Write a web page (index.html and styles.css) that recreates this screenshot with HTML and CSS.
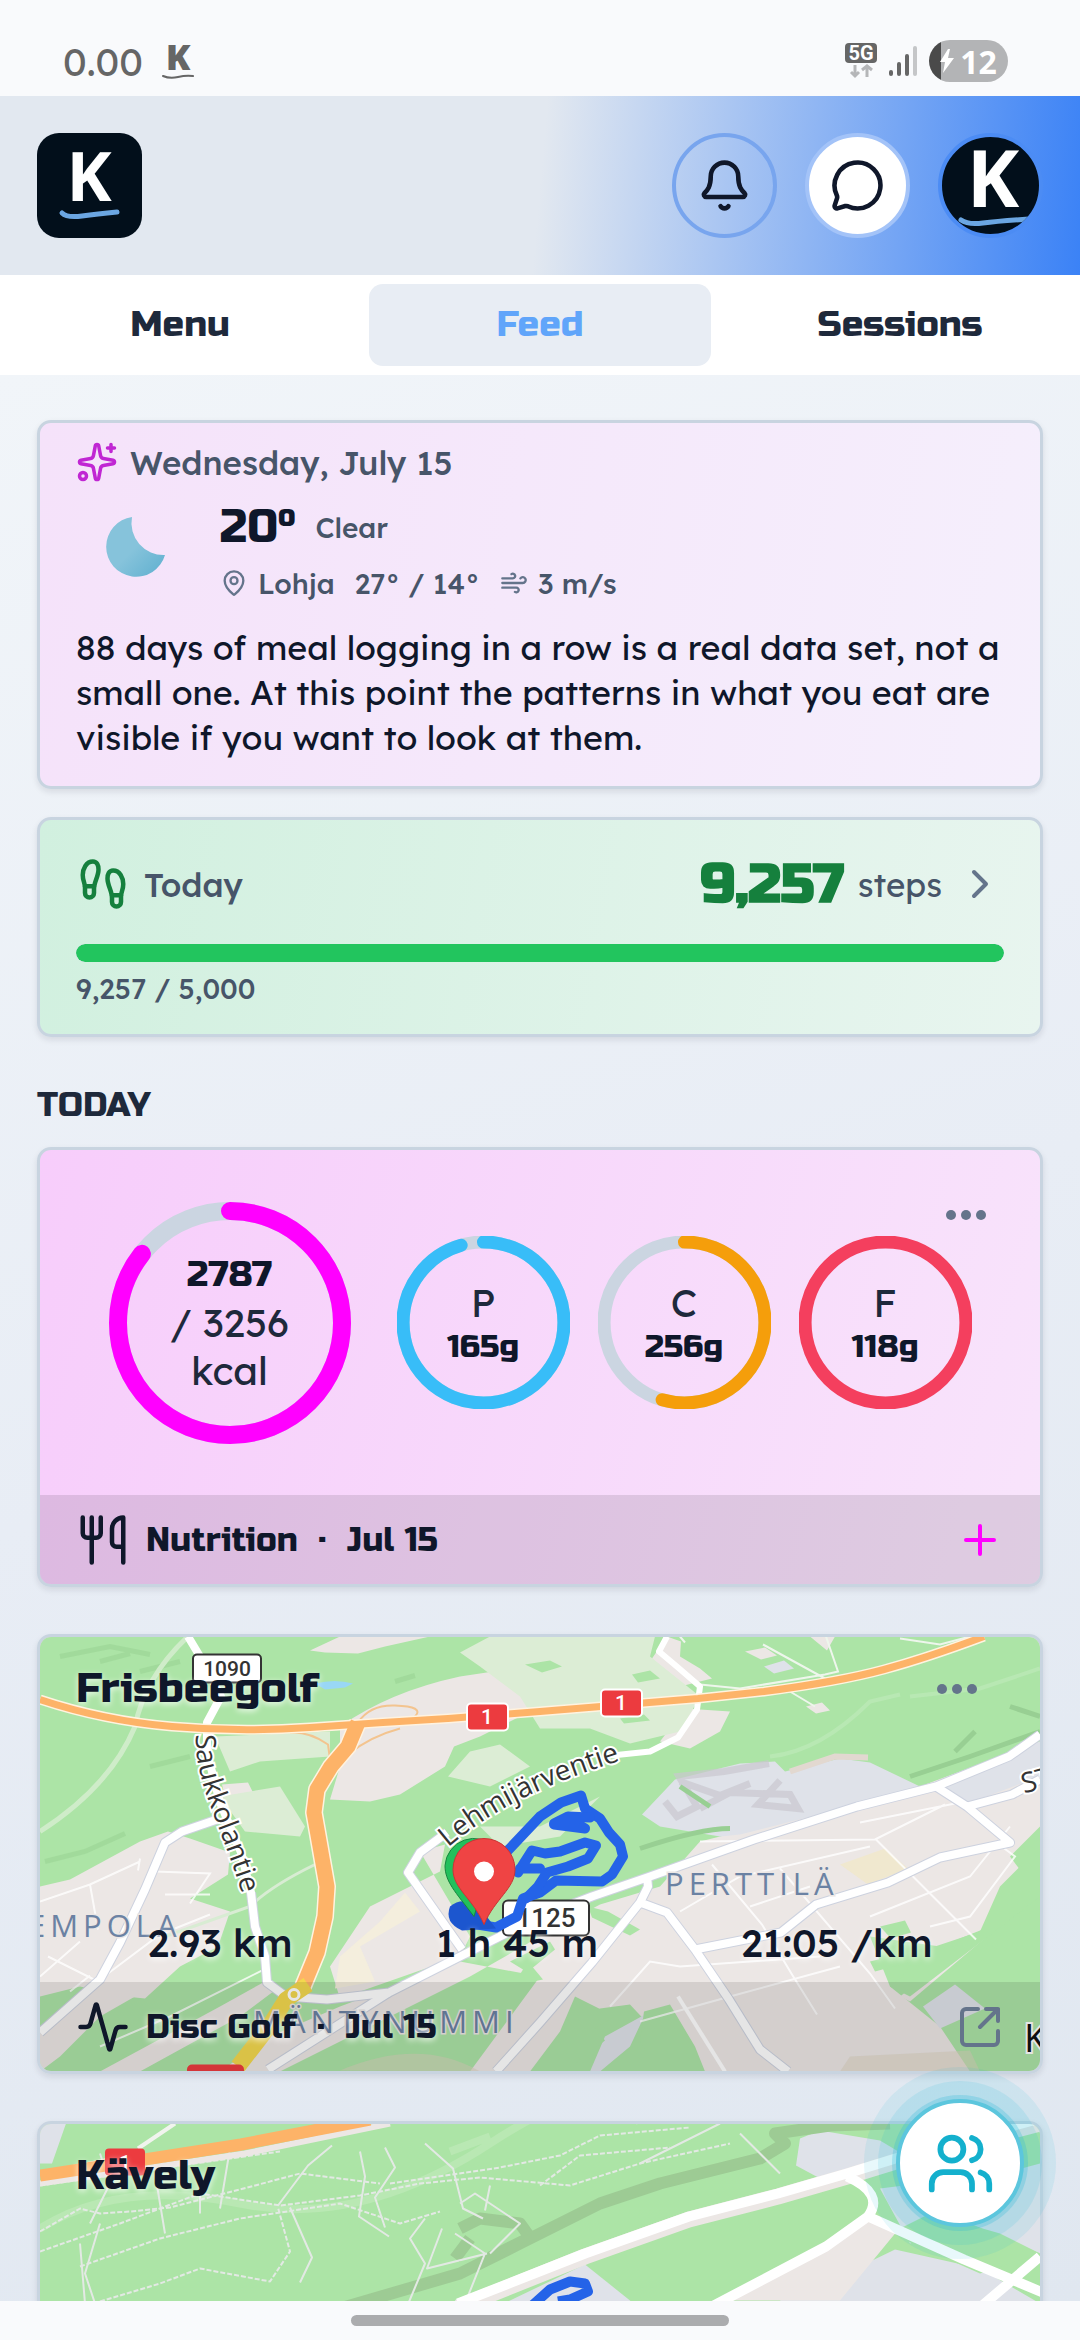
FILE: index.html
```html
<!doctype html>
<html lang="en">
  <head>
    <meta charset="UTF-8" />
    <meta name="viewport" content="width=device-width, initial-scale=1.0" />
    <title>Feed</title>
    <link rel="stylesheet" href="styles.css">
  </head>
  <body>
    <div class="status-bar">
      <div class="status-left">
        <span>0.00</span>
        <svg class="status-logo" viewBox="0 0 34 38">
          <text x="17" y="28" text-anchor="middle" class="status-k">K</text>
          <path d="M2 34q7 3 15 1t15-1" fill="none" stroke="#666" stroke-width="2" stroke-linecap="round" />
        </svg>
      </div>
      <div class="status-right">
        <svg width="32" height="36" viewBox="0 0 32 36">
          <rect width="32" height="20" rx="4" fill="#666" />
          <text x="16" y="17" text-anchor="middle" class="net-text">5G</text>
          <path d="M10 22v11m-4-4l4 4 4-4M22 34V23m-5 4l5-4 5 4" fill="none" stroke="#b5b6b8" stroke-width="3" />
        </svg>
        <svg width="28" height="30" viewBox="0 0 28 30">
          <path d="M2 26v2M10 18v10M18 10v18" stroke="#666" stroke-width="4" stroke-linecap="round" />
          <path d="M26 2v26" stroke="#c5c6c8" stroke-width="4" stroke-linecap="round" />
        </svg>
        <div class="battery">
          <svg width="14" height="24" viewBox="0 0 14 24"><path d="M8 0L0 13h5L3 24 14 9H8l2-9z" fill="#fff" /></svg>
          <span>12</span>
        </div>
      </div>
    </div>

    <header class="header">
      <a class="logo" href="#" aria-label="Home">
        <svg viewBox="0 0 105 105">
          <text x="52" y="68" text-anchor="middle" class="logo-k">K</text>
          <path d="M25 80q5 5 20 3t35-4" fill="none" stroke="#6ba6e2" stroke-width="5" stroke-linecap="round" />
        </svg>
      </a>
      <div class="header-actions">
        <button class="round-btn" aria-label="Notifications">
          <svg class="icon" width="55" height="55" viewBox="0 0 24 24">
            <path d="M10.268 21a2 2 0 0 0 3.464 0" />
            <path d="M3.262 15.326A1 1 0 0 0 4 17h16a1 1 0 0 0 .74-1.673C19.41 13.956 18 12.499 18 8A6 6 0 0 0 6 8c0 4.499-1.411 5.956-2.738 7.326" />
          </svg>
        </button>
        <button class="round-btn round-btn-white" aria-label="Messages">
          <svg class="icon" width="55" height="55" viewBox="0 0 24 24">
            <path d="M2.992 16.342a2 2 0 0 1 .094 1.167l-1.065 3.29a1 1 0 0 0 1.236 1.168l3.413-.998a2 2 0 0 1 1.099.092 10 10 0 1 0-4.777-4.719" />
          </svg>
        </button>
        <button class="round-btn round-btn-avatar" aria-label="Profile">
          <svg viewBox="0 0 97 97">
            <text x="51" y="70" text-anchor="middle" class="avatar-k">K</text>
            <path d="M19 83q7 5 22 3t46-4" fill="none" stroke="#6ba6e2" stroke-width="5" stroke-linecap="round" />
          </svg>
        </button>
      </div>
    </header>

    <nav class="tabs">
      <a href="#" class="tab">Menu</a>
      <a href="#" class="tab active">Feed</a>
      <a href="#" class="tab">Sessions</a>
    </nav>

    <main class="feed">
      <section class="card daily">
        <div class="daily-date">
          <svg class="icon icon-purple" width="42" height="42" viewBox="0 0 24 24">
            <path d="M11.017 2.814a1 1 0 0 1 1.966 0l1.051 5.558a2 2 0 0 0 1.594 1.594l5.558 1.051a1 1 0 0 1 0 1.966l-5.558 1.051a2 2 0 0 0-1.594 1.594l-1.051 5.558a1 1 0 0 1-1.966 0l-1.051-5.558a2 2 0 0 0-1.594-1.594l-5.558-1.051a1 1 0 0 1 0-1.966l5.558-1.051a2 2 0 0 0 1.594-1.594z" />
            <path d="M20 2v4M22 4h-4" />
            <circle cx="4" cy="20" r="2" />
          </svg>
          <span>Wednesday, July 15</span>
        </div>
        <div class="weather">
          <svg class="moon" width="120" height="78" viewBox="0 0 120 78">
            <defs>
              <linearGradient id="moon" x1="0" y1="0" x2="1" y2="1">
                <stop offset="0.5" stop-color="#86c3db" />
                <stop offset="1" stop-color="#5eafcf" />
              </linearGradient>
            </defs>
            <path d="M56 1A30 30 0 1 0 89 39A32 32 0 0 1 56 1z" fill="url(#moon)" />
          </svg>
          <div>
            <div class="weather-row">
              <span class="temp">20º</span>
              <span>Clear</span>
            </div>
            <div class="weather-row">
              <span class="weather-item">
                <svg class="icon icon-muted" width="28" height="28" viewBox="0 0 24 24">
                  <path d="M20 10c0 4.993-5.539 10.193-7.399 11.799a1 1 0 0 1-1.202 0C9.539 20.193 4 14.993 4 10a8 8 0 0 1 16 0" />
                  <circle cx="12" cy="10" r="3" />
                </svg>
                Lohja
              </span>
              <span>27° / 14°</span>
              <span class="weather-item">
                <svg class="icon icon-muted" width="28" height="28" viewBox="0 0 24 24">
                  <path d="M12.8 19.6A2 2 0 1 0 14 16H2" />
                  <path d="M17.5 8a2.5 2.5 0 1 1 2 4H2" />
                  <path d="M9.8 4.4A2 2 0 1 1 11 8H2" />
                </svg>
                3 m/s
              </span>
            </div>
          </div>
        </div>
        <p class="daily-text">88 days of meal logging in a row is a real data set, not a small one. At this point the patterns in what you eat are visible if you want to look at them.</p>
      </section>

      <section class="card steps">
        <div class="steps-row">
          <svg class="icon icon-green" width="54" height="54" viewBox="0 0 24 24">
            <path d="M4 16v-2.38C4 11.5 2.97 10.5 3 8c.03-2.72 1.49-6 4.5-6C9.37 2 10 3.8 10 5.5c0 3.11-2 5.66-2 8.68V16a2 2 0 1 1-4 0Z" />
            <path d="M20 20v-2.38c0-2.12 1.03-3.12 1-5.62-.03-2.72-1.49-6-4.5-6C14.63 6 14 7.8 14 9.5c0 3.11 2 5.66 2 8.68V20a2 2 0 1 0 4 0Z" />
            <path d="M16 17h4M4 13h4" />
          </svg>
          <span class="steps-label">Today</span>
          <span class="steps-count">9,257</span>
          <span>steps</span>
          <svg class="icon icon-muted" width="48" height="48" viewBox="0 0 24 24"><path d="m9 18 6-6-6-6" /></svg>
        </div>
        <div class="progress"><div class="progress-fill" style="width: 100%"></div></div>
        <div class="steps-goal">9,257 / 5,000</div>
      </section>

      <h2 class="section-title">TODAY</h2>

      <section class="card tile">
        <div class="tile-body nutrition">
          <button class="more more-nutrition" aria-label="More">
            <svg width="42" height="12" viewBox="0 0 42 12"><circle cx="6" cy="6" r="5" /><circle cx="21" cy="6" r="5" /><circle cx="36" cy="6" r="5" /></svg>
          </button>
          <div class="ring ring-big">
            <svg viewBox="0 0 242 242">
              <circle class="track" cx="121" cy="121" r="112" stroke-width="18" />
              <circle class="arc" cx="121" cy="121" r="112" stroke-width="18" stroke="#ff00ff" pathLength="100" stroke-dasharray="85.6 100" />
            </svg>
            <div class="ring-text">
              <strong>2787</strong>
              <span>/ 3256</span>
              <span>kcal</span>
            </div>
          </div>
          <div class="macros">
            <div class="ring">
              <svg viewBox="0 0 172 172">
                <circle class="track" cx="86" cy="86" r="80" stroke-width="13" />
                <circle class="arc" cx="86" cy="86" r="80" stroke-width="13" stroke="#38bdf8" pathLength="100" stroke-dasharray="95.5 100" />
              </svg>
              <div class="ring-text"><span>P</span><strong>165g</strong></div>
            </div>
            <div class="ring">
              <svg viewBox="0 0 172 172">
                <circle class="track" cx="86" cy="86" r="80" stroke-width="13" />
                <circle class="arc" cx="86" cy="86" r="80" stroke-width="13" stroke="#f59e0b" pathLength="100" stroke-dasharray="54.5 100" />
              </svg>
              <div class="ring-text"><span>C</span><strong>256g</strong></div>
            </div>
            <div class="ring">
              <svg viewBox="0 0 172 172">
                <circle class="arc" cx="86" cy="86" r="80" stroke-width="13" stroke="#f43f5e" />
              </svg>
              <div class="ring-text"><span>F</span><strong>118g</strong></div>
            </div>
          </div>
        </div>
        <footer class="tile-footer">
          <svg class="icon" width="54" height="54" viewBox="0 0 24 24">
            <path d="M3 2v7c0 1.1.9 2 2 2h4a2 2 0 0 0 2-2V2M7 2v20M21 15V2a5 5 0 0 0-5 5v6c0 1.1.9 2 2 2h3Zm0 0v7" />
          </svg>
          <span class="tile-meta">Nutrition&nbsp; ·&nbsp; Jul 15</span>
          <button class="footer-btn icon-magenta" aria-label="Add meal">
            <svg class="icon" width="48" height="48" viewBox="0 0 24 24"><path d="M5 12h14M12 5v14" /></svg>
          </button>
        </footer>
      </section>

      <section class="card tile">
        <svg class="map" viewBox="0 0 1000 435" preserveAspectRatio="xMidYMid slice">
          <rect width="1000" height="435" fill="#ace4a6" />
          <!-- open land -->
          <g fill="#ece7e5">
            <path d="M270 14L300 0H390L345 10 318 17 285 16z" />
            <path d="M0 250L30 243 100 205 128 195 150 202 190 216 188 238 150 262 190 275 178 310 140 330 105 362 85 360 40 350 0 360z" />
            <path d="M0 395L60 345 95 360 60 380 20 420 0 435z" />
            <path d="M182 148L208 146 214 158 200 168 186 164z" />
            <path d="M300 90Q350 55 420 40L500 28 560 40 500 70 440 100 414 110 405 130 360 158 330 165 290 163 300 130z" />
            <path d="M420 325L300 370 230 400 180 435H240L430 340 500 300 560 268 620 250 660 205 720 190 880 150 1000 105V190L970 220 985 240 950 290 900 310 830 300 850 350 900 390 930 435H640L620 400 590 368 560 372 520 400 500 435H430L500 340z" />
            <path d="M290 330L330 270 400 235 405 208 380 215 430 300 420 320 300 362z" />
            <path d="M225 345L240 350 200 380 100 435H60L180 370z" />
            <path d="M627 0L641 5 640 20 660 32 672 42 640 50 612 22z" />
            <path d="M645 72L690 75 680 95 650 112 620 105z" />
            <path d="M705 15l20-4 12 8-16 4zM770 0h25l-8 14zM766 70l16-4 8 8-14 3z" />
            <path d="M1000 255L870 365 860 360 985 262z" />
          </g>
          <g fill="#dcedd5">
            <path d="M420 16L450 0H615L610 20 660 60 640 95 590 107 550 92 500 92 480 60 440 30z" />
            <path d="M175 100L290 95 290 120 220 125 190 135zM408 140L430 115 460 108 490 130 450 150zM205 195L180 160 240 150 265 190 260 200z" />
            <path d="M440 190L500 190 560 160 520 200 460 210z" />
          </g>
          <g fill="#ace4a6">
            <path d="M485 28l25-4 12 6-20 6zM592 38l18-4 10 8-22 4zM580 82l24-4 6 6-26 3z" />
            <path d="M880 315l60-20 20-45 40-40V260L870 360 850 350 862 340zM830 325l40-10 10 8-45 12zM840 290l25-6 6 12-20 6z" />
            <path d="M548 270l20 5 32 18-10 6-38-18zM470 325l40-20 5 8-22 18 10 12-30 6 10-16z" />
          </g>
          <!-- industrial land -->
          <g fill="#dfe2e9">
            <path d="M602 178L635 143 700 127 735 125 745 135 800 122 830 126 880 150 810 170 700 198 680 200 620 190z" />
            <path d="M900 150L1000 105V140L925 168zM724 30l20-6 10 8-20 5z" />
            <path d="M565 400L605 378 590 410 560 435H550zM883 370L915 348 945 372 900 392z" />
          </g>
          <path d="M604 375L630 368 655 410 665 435H620L600 405zM535 360l40 20-20 12 10 12-40 31h-35l30-40z" fill="#ace4a6" />
          <g fill="none" stroke="#c9c8cf" stroke-width="7" opacity="0.7">
            <path d="M625 165l12 15 20-10-18-30 45-5 45-8M660 172l30-16 60 2 8 14-40-4 22-24M640 145l40 14 30-12" />
          </g>
          <path d="M750 135L795 120 828 121" fill="none" stroke="#e2d8d0" stroke-width="6" />
          <path d="M640 150l30 20M600 212q60-20 90-20M870 140l60-20 70-25M915 115l20-20M970 70l30 10" fill="none" stroke="#98cf93" stroke-width="5" />
          <path d="M340 285L365 256 380 275 320 310 335 345 295 352 300 320zM290 435z" fill="#f4eedd" />
          <path d="M800 228L845 212 868 232 828 248z" fill="#f0e8cf" />
          <path d="M300 434Q380 400 440 435zM810 420l120-6 10 21H800z" fill="#ddd3bf" opacity="0.5" />
          <path d="M275 47q20-5 38 0l-8 4-20 2z" fill="#99d7f5" />
          <!-- hill shading -->
          <g fill="none" stroke="#9dd697" stroke-width="5" opacity="0.7">
            <path d="M20 20l50-10 40 8M110 130l40-10M5 225l40-10 40-18M60 25l30-8M355 45l20-6M100 35l40-10" />
          </g>
          <!-- minor roads -->
          <g fill="none" stroke="#fff" stroke-width="2" opacity="0.8">
            <path d="M0 265L50 248 100 225M50 248l8 45M115 235l55 2-20 30M8 320l50 25M0 340l40-35M30 355l20-16M60 343l60-45 50-20M125 258h45M100 222l-2 12" />
            <path d="M672 228l50 60 30 50 25 40M740 232l90 105 25 35M836 203l70 70 30 30M830 280l100-40 40-50M660 205l175-2 70-35M820 186l100-20M640 275l60-35 130-30M570 370l40-45 30 5 140-10M600 385l90-25 110-30M890 290l40-10 45-60-20-15M710 270l60-20" />
            <path d="M60 410l70-30 100-50" />
          </g>
          <path d="M638 360L685 435" stroke="#fff" stroke-width="4" />
          <path d="M0 195Q70 150 95 90 105 40 148 0" fill="none" stroke="#cfecc9" stroke-width="5" />
          <path d="M275 228Q230 250 210 270L125 300" fill="none" stroke="#d8ecd3" stroke-width="3" />
          <path d="M660 48L700 52 785 38 798 35 786 0M640 0l5 6M785 42l-62-34M745 52l30 18M860 2l40 6 30-8" fill="none" stroke="#eef6ec" stroke-width="2" />
          <path d="M730 120q50-5 100-55l30-7M870 60l70-8 60-20" fill="none" stroke="#b8e8b3" stroke-width="4" />
          <!-- main roads -->
          <g fill="none" stroke="#cdd2df" stroke-width="10" stroke-linejoin="round">
            <path d="M211 256L215 290 225 320 227 346 246 360 287 363 349 356 428 316 500 280 552 260 610 240 714 203 817 170 896 150 969 120 1000 98" />
            <path d="M177 183L142 195 125 206 105 253 80 306 60 343 0 396M407 196L380 216 368 236 422 313M228 433L349 356" />
            <path d="M607 240L608 250 600 266 552 326 500 386 456 435M600 266L627 276 655 313 689 363 720 413 748 435M655 313L741 296 776 268 848 246 900 221 970 206 927 170 896 150M927 170L972 158 1000 143" />
          </g>
          <g fill="none" stroke="#fff" stroke-width="8" stroke-linejoin="round">
            <path d="M148 0L160 20 181 60 167 86 167 116 180 166 201 216 211 256 215 290 225 320 227 346 246 360 287 363 349 356 428 316 500 280 552 260 610 240 714 203 817 170 896 150 969 120 1000 98" />
            <path d="M177 183L142 195 125 206 105 253 80 306 60 343 0 396M407 196L380 216 368 236 422 313M228 433L349 356" />
            <path d="M607 240L608 250 600 266 552 326 500 386 456 435M600 266L627 276 655 313 689 363 720 413 748 435M655 313L741 296 776 268 848 246 900 221 970 206 927 170 896 150M927 170L972 158 1000 143" />
            <path d="M627 0L619 15 638 31 660 50 657 73 638 101 610 115 572 119" stroke-width="6" />
          </g>
          <!-- highways -->
          <g fill="none" stroke-linejoin="round">
            <path d="M318 86Q330 68 355 69 385 70 375 80 365 86 345 87M291 130L288 108Q270 95 250 96M308 118Q330 100 360 92" stroke="#f3c48f" stroke-width="2" />
            <path d="M318 86L308 110 291 130 277 153 274 176 280 210 287 250 285 280 277 316 263 350" stroke="#fff3e0" stroke-width="18" />
            <path d="M0 63Q63 84 132 90T270 91 408 82L500 75 658 62 724 55Q800 45 844 33T944 0" stroke="#fff3e0" stroke-width="10" />
            <path d="M0 63Q63 84 132 90T270 91 408 82L500 75 658 62 724 55Q800 45 844 33T944 0" stroke="#fdb368" stroke-width="7" />
            <path d="M318 86L308 110 291 130 277 153 274 176 280 210 287 250 285 280 277 316 263 350" stroke="#fdb368" stroke-width="15" />
            <path d="M268 348L246 363 229 390 198 430" stroke="#f3d84f" stroke-width="16" />
            <circle cx="254" cy="358" r="5" stroke="#fff" stroke-width="3" />
          </g>
          <!-- place names -->
          <g class="place">
            <text x="-12" y="300">EMPOLA</text>
            <text x="213" y="396">MÄNTYNUMMI</text>
            <text x="625" y="258">PERTTILÄ</text>
          </g>
          <g class="street">
            <path id="saukko" d="M156 98C154 150 184 190 210 284" fill="none" stroke="none" />
            <path id="lehmi" d="M408 211C450 175 500 148 600 118" fill="none" stroke="none" />
            <text><textPath href="#saukko">Saukkolantie</textPath></text>
            <text><textPath href="#lehmi">Lehmijärventie</textPath></text>
            <text x="984" y="157" transform="rotate(-15 984 157)">ST</text>
            <text x="984" y="415" class="town">K</text>
          </g>
          <!-- road shields -->
          <g class="shield">
            <rect x="153" y="18" width="68" height="28" rx="4" fill="#fff" stroke="#333" stroke-width="2" />
            <text x="187" y="39">1090</text>
            <rect x="463" y="264" width="86" height="35" rx="5" fill="#fff" stroke="#333" stroke-width="2" />
            <text x="506" y="290" class="shield-big">1125</text>
          </g>
          <g class="shield shield-red">
            <rect x="427" y="67" width="41" height="27" rx="4" fill="#ec3b3f" stroke="#fff" stroke-width="2" />
            <text x="447" y="87">1</text>
            <rect x="561" y="53" width="41" height="27" rx="4" fill="#ec3b3f" stroke="#fff" stroke-width="2" />
            <text x="581" y="73">1</text>
            <rect x="147" y="428" width="57" height="27" rx="5" fill="#ec3b3f" />
          </g>
          <!-- recorded route -->
          <g fill="none" stroke="#2463e8" stroke-width="10" stroke-linejoin="round" stroke-linecap="round">
            <path d="M466 216L500 180 521 166 541 159 545 172 560 182 569 196 580 208 583 220 572 238 562 245 516 244 500 256 483 262 477 280 456 291 425 286" />
            <path d="M514 187L528 180 550 181M514 188L545 192 534 186M478 236L492 214 505 217 520 215 545 206 556 209 548 222 528 230 507 236 498 250 486 262M480 232L500 232" />
          </g>
          <path d="M410 270q15-12 32 4l14 18-34 2q-18-8-12-24z" fill="#1c56cf" />
          <path d="M434 280C415 255 405 245 405 229a29 29 0 0 1 50-18z" fill="#22c05c" stroke="#18853f" />
          <path d="M444 288C433 262 413 252 413 233a31 31 0 0 1 62 0C475 252 455 262 444 288z" fill="#ef4444" stroke="#c93535" />
          <circle cx="444" cy="235" r="10" fill="#fff" />
        </svg>
        <div class="tile-body activity">
          <div class="tile-head">
            <h3 class="tile-title">Frisbeegolf</h3>
            <button class="more" aria-label="More">
              <svg width="42" height="12" viewBox="0 0 42 12"><circle cx="6" cy="6" r="5" /><circle cx="21" cy="6" r="5" /><circle cx="36" cy="6" r="5" /></svg>
            </button>
          </div>
          <div class="stats">
            <span>2.93 km</span>
            <span>1 h 45 m</span>
            <span>21:05 /km</span>
          </div>
        </div>
        <footer class="tile-footer">
          <svg class="icon" width="54" height="54" viewBox="0 0 24 24">
            <path d="M22 12h-2.48a2 2 0 0 0-1.93 1.46l-2.35 8.36a.25.25 0 0 1-.48 0L9.24 2.18a.25.25 0 0 0-.48 0l-2.35 8.36A2 2 0 0 1 4.49 12H2" />
          </svg>
          <span class="tile-meta">Disc Golf&nbsp; ·&nbsp; Jul 15</span>
          <button class="footer-btn icon-muted" aria-label="Open activity">
            <svg class="icon" width="48" height="48" viewBox="0 0 24 24"><path d="M15 3h6v6M21 3l-9 9M21 14v5a2 2 0 0 1-2 2H5a2 2 0 0 1-2-2V5a2 2 0 0 1 2-2h6" /></svg>
          </button>
        </footer>
      </section>

      <section class="card tile">
        <svg class="map" viewBox="0 0 1000 435" preserveAspectRatio="xMidYMid slice">
          <rect width="1000" height="435" fill="#ace4a6" />
          <path d="M0 0h26L12 40H0zM760 15l20-8 60 10 20 12-50 22-28 5-26-14z" fill="#dfe2e9" />
          <path d="M545 141L590 177 620 220H390L470 177zM855 126L793 156 740 177V435H1000V180L940 145z" fill="#dfe2e9" />
          <path d="M840 65l80-10 80-20v95l-70-30-60 20z" fill="#dfe2e9" />
          <path d="M850 110L890 90 960 110 1000 130 940 150zM900 40L1000 10V40L890 70z" fill="#ace4a6" />
          <path d="M690 177L790 120 828 90 860 104 800 177z" fill="#ece7e5" />
          <g fill="none" stroke="#9dcb94" stroke-width="12" stroke-linejoin="round">
            <path d="M300 185L420 150 480 120 560 80 620 60 720 35 745 20 735 10 790 2 850 0M430 115l-15 20M420 105l20-10 40 5 10 14-40 20" />
          </g>
          <path d="M0 105q80-50 200-25T450 20 600 0M410 28l40-15" fill="none" stroke="#b9e8b3" stroke-width="8" />
          <!-- trails -->
          <g fill="none" stroke="#e3e9e4" stroke-width="2" stroke-linejoin="round">
            <path d="M0 128L80 100 160 70 240 82 320 72 380 60 440 54 530 62 600 40 690 20M0 108L40 85 60 90 90 88 130 84 200 66 260 50 340 60M0 62L190 35 240 28M40 143L120 115 200 95 300 80 360 100 400 88M60 178L120 160 160 145 230 158 250 128 238 84M350 60l110-16 60-12 40-20 90-8M500 62l40-30 90-8M250 22l60-20" stroke-dasharray="5 2" />
            <path d="M40 120l5 60M60 100l-15 50 10 30M60 30l10 30-20 40M130 30l-15 20 10 60M238 82l30-40 24-20M320 28l5 25-6 40 30 20M345 24l10 20-20 30 10 30M385 20l28 25 10 40 20 10M190 25l-10 60M160 60v30M250 84l22 50-12 25M385 95l-15 20 15 25-25 60M402 105l-15 40 60-15M415 110l30 20-20 50M450 62l-5 25M420 80l15-10 45 30-30 30M600 40l80-40M700 10l40 40" />
          </g>
          <path d="M0 50L100 30M98 25L135 0" stroke="#f1f4ee" stroke-width="4" />
          <path d="M0 60L98 46 205 30 350 0" fill="none" stroke="#ece7e5" stroke-width="6" />
          <path d="M0 52L98 37 201 21 330-4" fill="none" stroke="#fdb368" stroke-width="12" />
          <g fill="none" stroke="#fff" stroke-width="10" stroke-linejoin="round">
            <path d="M418 184L545 133 649 96 738 73 807 53 862 36 1000 0" stroke="#ece7e5" stroke-width="16" />
            <path d="M418 180L545 130 649 93 738 70 807 50 862 33 1000-5M807 53Q845 70 828 93L786 123 670 184M828 93L924 136 1010 172M1000 133L940 184" />
          </g>
          <path d="M490 184L510 166 530 158 545 160 548 168 530 176 518 178" fill="none" stroke="#2463e8" stroke-width="10" stroke-linejoin="round" />
          <g class="shield shield-red">
            <rect x="65" y="25" width="40" height="27" rx="4" fill="#ec3b3f" />
            <text x="85" y="46">1</text>
          </g>
        </svg>
        <div class="tile-body activity">
          <div class="tile-head">
            <h3 class="tile-title">Kävely</h3>
          </div>
        </div>
      </section>

      <button class="fab" aria-label="Friends">
        <svg class="icon" width="69" height="69" viewBox="0 0 24 24">
          <path d="M16 21v-2a4 4 0 0 0-4-4H6a4 4 0 0 0-4 4v2M16 3.128a4 4 0 0 1 0 7.744M22 21v-2a4 4 0 0 0-3-3.87" />
          <circle cx="9" cy="7" r="4" />
        </svg>
      </button>
    </main>

    <div class="gesture-bar"><div class="gesture-pill"></div></div>
  </body>
</html>
```
FILE: styles.css
```css
* {
  box-sizing: border-box;
}
body {
  margin: 0;
  height: 100vh;
  display: flex;
  flex-direction: column;
  overflow: hidden;
  font-family: Lexend, Inter, sans-serif;
  font-size: 33px;
  color: #0f172a;
  background: #f9fafc;
}
button {
  font: inherit;
  color: inherit;
  background: none;
  border: none;
  padding: 0;
  cursor: pointer;
}
a {
  color: inherit;
  text-decoration: none;
}
svg {
  display: block;
  flex-shrink: 0;
}
.icon {
  fill: none;
  stroke: currentColor;
  stroke-width: 2;
  stroke-linecap: round;
  stroke-linejoin: round;
}
.icon-purple {
  color: #c026d3;
}
.icon-green {
  color: #15803d;
}
.icon-muted {
  color: #64748b;
}
.icon-magenta {
  color: #ff00ff;
}

/* status bar */
.status-bar {
  height: 96px;
  padding: 27px 72px 0 63px;
  display: flex;
  justify-content: space-between;
  flex-shrink: 0;
  color: #666;
}
.status-left,
.status-right {
  display: flex;
  align-items: center;
  height: 68px;
}
.status-left {
  gap: 18px;
  font-size: 39px;
}
.status-logo {
  width: 34px;
  height: 38px;
}
.status-k {
  font-family: "Open Sans", sans-serif;
  font-size: 36px;
  font-weight: 800;
  fill: #666;
}
.status-right {
  gap: 12px;
}
.net-text {
  font-family: Roboto, sans-serif;
  font-size: 20px;
  font-weight: 700;
  fill: #fff;
}
.battery {
  display: flex;
  align-items: center;
  justify-content: center;
  gap: 6px;
  width: 79px;
  height: 42px;
  border-radius: 21px;
  background: linear-gradient(90deg, #4a4a4a 12px, #b3b4b6 12px);
  color: #fff;
  font-family: "Open Sans", sans-serif;
  font-size: 32px;
  font-weight: 700;
}

/* header */
.header {
  height: 179px;
  padding: 0 37px;
  display: flex;
  align-items: center;
  justify-content: space-between;
  flex-shrink: 0;
  background: linear-gradient(95deg, #e2e8f0 50%, #3b82f6);
}
.logo {
  width: 105px;
  height: 105px;
  border-radius: 22px;
  background: #020f1b;
}
.logo-k {
  font-family: "Open Sans", sans-serif;
  font-size: 68px;
  font-weight: 700;
  fill: #fff;
}
.header-actions {
  display: flex;
  gap: 28px;
}
.round-btn {
  width: 105px;
  height: 105px;
  display: flex;
  align-items: center;
  justify-content: center;
  border: 4px solid #78a5ee;
  border-radius: 50%;
}
.round-btn-white {
  background: #fff;
  border-color: #a3c3f8;
}
.round-btn-avatar {
  background: #020f1b;
  border-color: #4c8cf4;
  overflow: hidden;
}
.round-btn-avatar svg {
  width: 97px;
  height: 97px;
}
.avatar-k {
  font-family: "Open Sans", sans-serif;
  font-size: 79px;
  font-weight: 700;
  fill: #fff;
}

/* tabs */
.tabs {
  display: grid;
  grid-template-columns: repeat(3, 1fr);
  gap: 18px;
  padding: 9px;
  flex-shrink: 0;
  background: #fff;
}
.tab {
  border-radius: 14px;
  text-align: center;
  font-size: 36px;
  line-height: 82px;
  color: #1e293b;
}
.tab.active {
  background: #e8edf4;
  color: #60a5fa;
}
.tab,
.temp,
.steps-count,
.section-title,
.ring-text strong,
.tile-meta,
.tile-title {
  font-family: "Russo One", Inter, sans-serif;
  font-weight: 400;
}

/* feed */
.feed {
  position: relative;
  flex: 1;
  min-height: 0;
  padding: 45px 37px 0;
  overflow: hidden;
  background: linear-gradient(160deg, #f1f5f9, #e8edf5 50%, #e0e7f0);
}
.card {
  position: relative;
  margin-bottom: 28px;
  border: 3px solid #c8d4e0;
  border-radius: 14px;
  box-shadow: 0 3px 6px rgba(15, 23, 42, 0.1);
}
.daily {
  padding: 24px 36px 26px;
  background: linear-gradient(100deg, #f5e2fa, #f5effc);
}
.daily-date {
  display: flex;
  align-items: center;
  gap: 12px;
  height: 30px;
  font-weight: 500;
  color: #475569;
}
.weather {
  display: flex;
  align-items: center;
  gap: 24px;
  margin: 22px 0 14px;
  font-size: 28px;
  font-weight: 500;
  color: #475569;
}
.weather-row {
  display: flex;
  align-items: center;
  gap: 20px;
  height: 56px;
}
.weather-item {
  display: flex;
  align-items: center;
  gap: 10px;
}
.temp {
  font-size: 46px;
  color: #0f172a;
}
.daily-text {
  margin: 0;
  font-size: 34px;
  line-height: 45px;
}
.steps {
  padding: 24px 36px 28px;
  background: linear-gradient(100deg, #d1f0df, #e8f5ef);
  color: #475569;
}
.steps-row {
  display: flex;
  align-items: center;
  gap: 14px;
  height: 80px;
}
.steps-label {
  flex: 1;
  font-weight: 500;
}
.steps-count {
  font-size: 55px;
  font-weight: 700;
  color: #15803d;
}
.progress {
  height: 18px;
  margin: 20px 0 10px;
  border-radius: 9px;
  background: #cbd5e1;
  overflow: hidden;
}
.progress-fill {
  height: 100%;
  border-radius: 9px;
  background: #22c55e;
}
.steps-goal {
  font-size: 28px;
  font-weight: 500;
  line-height: 34px;
}
.section-title {
  margin: 48px 0 22px;
  font-size: 34px;
  line-height: 40px;
  color: #1e293b;
}

/* tiles */
.tile {
  display: flex;
  flex-direction: column;
  height: 440px;
  margin-bottom: 47px;
  overflow: hidden;
  background: linear-gradient(105deg, #f7cdfb, #f8e4fb);
}
.tile-body {
  position: relative;
  flex: 1;
}
.nutrition {
  display: flex;
  align-items: center;
  justify-content: center;
  gap: 46px;
}
.more {
  height: 36px;
  fill: #64748b;
}
.more-nutrition {
  position: absolute;
  top: 47px;
  right: 53px;
}
.macros {
  display: flex;
  gap: 28px;
}
.ring {
  position: relative;
  width: 173px;
  height: 173px;
}
.ring-big {
  width: 242px;
  height: 242px;
}
.ring circle {
  fill: none;
}
.track {
  stroke: #cbd5e1;
}
.arc {
  stroke-linecap: round;
  transform: rotate(-90deg);
  transform-origin: center;
}
/* values sit inside the ring */
.ring-text {
  position: absolute;
  inset: 0;
  display: flex;
  flex-direction: column;
  align-items: center;
  justify-content: center;
  padding-top: 4px;
  font-size: 39px;
  line-height: 44px;
  color: #1e293b;
}
.ring-text strong {
  font-size: 32px;
  color: #0f172a;
}
.ring-big .ring-text {
  padding-top: 0;
  line-height: 48px;
}
.ring-big strong {
  font-size: 36px;
}
.tile-footer {
  position: relative;
  display: flex;
  align-items: center;
  gap: 16px;
  height: 89px;
  padding: 0 36px;
  background: rgba(0, 0, 0, 0.1);
}
.tile-meta {
  flex: 1;
  font-size: 33px;
}
.map {
  position: absolute;
  top: 0;
  left: 0;
  width: 100%;
  height: 100%;
}
.activity {
  display: flex;
  flex-direction: column;
  justify-content: space-between;
  padding: 28px 36px 15px;
}
.tile-head {
  display: flex;
  align-items: center;
  justify-content: space-between;
  padding-right: 26px;
}
.tile-title {
  margin: 0;
  font-size: 42px;
  line-height: 48px;
}
.tile-title,
.activity .stats,
.map ~ .tile-footer {
  text-shadow: 0 2px 6px rgba(255, 255, 255, 0.8);
}
.stats {
  display: flex;
  justify-content: space-around;
  font-size: 39px;
  font-weight: 500;
  line-height: 48px;
}

/* map labels */
.place text {
  font-family: "Open Sans", sans-serif;
  font-size: 31px;
  letter-spacing: 5px;
  fill: #6b82a3;
  stroke: #ece7e5;
  stroke-width: 3px;
  paint-order: stroke;
}
.street text {
  font-family: "Open Sans", sans-serif;
  font-size: 28px;
  font-weight: 500;
  fill: #333;
  stroke: #fff;
  stroke-width: 4px;
  paint-order: stroke;
}
.street .town {
  font-size: 38px;
  fill: #111;
}
.shield text {
  font-family: Roboto, sans-serif;
  font-size: 21px;
  font-weight: 500;
  text-anchor: middle;
  fill: #333;
}
.shield .shield-big {
  font-size: 26px;
}
.shield-red text {
  fill: #fff;
}

.fab {
  position: absolute;
  right: 56px;
  bottom: 74px;
  width: 128px;
  height: 128px;
  display: flex;
  align-items: center;
  justify-content: center;
  border: 4px solid #5cc6dd;
  border-radius: 50%;
  background: #fff;
  color: #14b0cd;
  box-shadow:
    0 0 0 4px rgba(34, 184, 214, 0.25),
    0 0 0 18px rgba(34, 184, 214, 0.13),
    0 0 0 32px rgba(34, 184, 214, 0.1);
}

.gesture-bar {
  display: flex;
  justify-content: center;
  align-items: center;
  height: 39px;
  flex-shrink: 0;
}
.gesture-pill {
  width: 378px;
  height: 11px;
  border-radius: 6px;
  background: #abacae;
}
```
